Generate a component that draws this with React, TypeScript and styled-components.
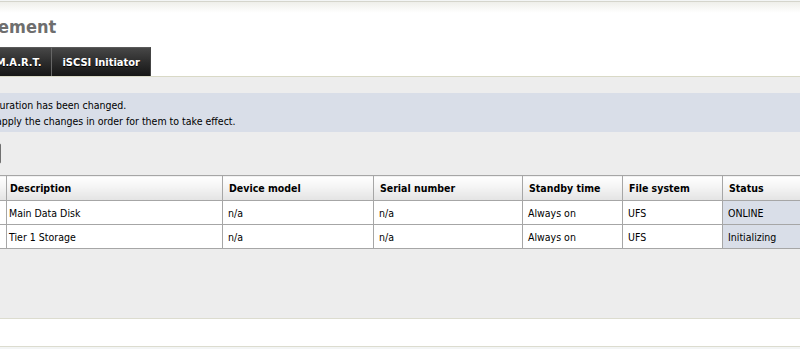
import React from 'react';
import styled, { createGlobalStyle } from 'styled-components';

const GlobalStyle = createGlobalStyle`
  html, body {
    margin: 0;
    padding: 0;
  }
  body {
    background: #f3f5f5;
    font-family: 'DejaVu Sans Condensed', 'DejaVu Sans', sans-serif;
    font-size: 10.5px;
    color: #000;
    overflow: hidden;
  }
`;

const Viewport = styled.div`
  width: 800px;
  height: 349px;
  overflow: hidden;
  padding-top: 1px;
  box-sizing: border-box;
`;

// the screenshot is a crop of a wider page, so the sheet starts left of the window
const Sheet = styled.div`
  margin-left: -140px;
  width: 1060px;
`;

const Header = styled.header`
  border-top: 1px solid #d5d5cc;
  border-bottom: 1px solid #d9d9c6;
  background: linear-gradient(to bottom, #efefea 0px, #ffffff 11px, #ffffff 100%);
  padding: 14px 0 0 22px;
`;

const Title = styled.h1`
  margin: 0;
  font-size: 18px;
  line-height: 22px;
  font-weight: bold;
  color: #6e6e6e;
`;

const TabRow = styled.nav`
  display: flex;
  margin: 9px 0 0 -2px;
  height: 29px;
`;

const Tab = styled.div`
  display: flex;
  align-items: center;
  padding: 0 10px;
  border-top: 1px solid #5a5a5a;
  border-left: 1px solid #666;
  background: linear-gradient(to bottom, #474747 0%, #2a2a2a 55%, #161616 100%);
  color: #fff;
  font-weight: bold;
  font-size: 11px;
  text-shadow: 0 1px 0 #000;
  white-space: nowrap;

  &:last-child {
    border-right: 1px solid #444;
  }
`;

const Content = styled.main`
  background: #ededed;
  border-bottom: 1px solid #dcdccf;
  padding: 16px 0 69px 22px;
`;

const InfoBox = styled.div`
  height: 39px;
  box-sizing: border-box;
  background: #d9dee8;
  padding-left: 68px;
  display: flex;
  flex-direction: column;
  justify-content: center;
  line-height: 16px;
`;

const ButtonRow = styled.div`
  display: flex;
  margin-top: 11px;
`;

const ApplyButton = styled.button`
  width: 119px;
  height: 21px;
  border: 1px solid #707070;
  border-radius: 2px;
  background: linear-gradient(to bottom, #fbfbfb, #dadada);
  font-family: inherit;
  font-size: 10.5px;
  color: #000;
  padding: 0;
`;

const Table = styled.table`
  margin-top: 11px;
  border-collapse: collapse;
  table-layout: fixed;
  width: 1020px;
`;

const Col = styled.col<{ $w: number }>`
  width: ${(p) => p.$w}px;
`;

const Th = styled.th<{ $pad: number }>`
  height: 24px;
  padding: 0 0 0 ${(p) => p.$pad + 1}px;
  border: 1px solid #a6a6a6;
  background: linear-gradient(to bottom, #ffffff 0%, #f4f4f4 45%, #e3e3e3 100%);
  text-align: left;
  font-weight: bold;
  white-space: nowrap;
  overflow: hidden;
`;

const Td = styled.td<{ $pad: number; $status?: boolean }>`
  height: 23px;
  padding: 0 0 0 ${(p) => p.$pad}px;
  border: 1px solid #a6a6a6;
  background: ${(p) => (p.$status ? '#d9dee8' : '#ffffff')};
  white-space: nowrap;
  overflow: hidden;
`;

const Footer = styled.footer`
  height: 27px;
  background: #fff;
  border-bottom: 1px solid #dcdccf;
`;

const tabs = ['Management', 'S.M.A.R.T.', 'iSCSI Initiator'];

type Disk = {
  disk: string;
  size: string;
  desc: string;
  model: string;
  serial: string;
  standby: string;
  fs: string;
  status: string;
};

const columns: { title: string; w: number; pad: number; key: keyof Disk }[] = [
  { title: 'Disk', w: 60, pad: 5, key: 'disk' },
  { title: 'Size', w: 64, pad: 5, key: 'size' },
  { title: 'Description', w: 216, pad: 2, key: 'desc' },
  { title: 'Device model', w: 151, pad: 5, key: 'model' },
  { title: 'Serial number', w: 149, pad: 5, key: 'serial' },
  { title: 'Standby time', w: 100, pad: 5, key: 'standby' },
  { title: 'File system', w: 100, pad: 5, key: 'fs' },
  { title: 'Status', w: 180, pad: 5, key: 'status' },
];

const disks: Disk[] = [
  { disk: 'ada0', size: '2.7TB', desc: 'Main Data Disk', model: 'n/a', serial: 'n/a', standby: 'Always on', fs: 'UFS', status: 'ONLINE' },
  { disk: 'ada1', size: '1.8TB', desc: 'Tier 1 Storage', model: 'n/a', serial: 'n/a', standby: 'Always on', fs: 'UFS', status: 'Initializing' },
];

export default function App() {
  return (
    <>
      <GlobalStyle />
      <Viewport>
        <Sheet>
          <Header>
            <Title>Disks|Management</Title>
            <TabRow>
              {tabs.map((t) => (
                <Tab key={t}>{t}</Tab>
              ))}
            </TabRow>
          </Header>

          <Content>
            <InfoBox>
              <div>The configuration has been changed.</div>
              <div>You must apply the changes in order for them to take effect.</div>
            </InfoBox>

            <ButtonRow>
              <ApplyButton>Apply changes</ApplyButton>
            </ButtonRow>

            <Table>
              <colgroup>
                {columns.map((c) => (
                  <Col key={c.title} $w={c.w} />
                ))}
              </colgroup>
              <thead>
                <tr>
                  {columns.map((c) => (
                    <Th key={c.title} $pad={c.pad}>
                      {c.title}
                    </Th>
                  ))}
                </tr>
              </thead>
              <tbody>
                {disks.map((d) => (
                  <tr key={d.disk}>
                    {columns.map((c) => (
                      <Td key={c.key} $pad={c.pad} $status={c.key === 'status'}>
                        {d[c.key]}
                      </Td>
                    ))}
                  </tr>
                ))}
              </tbody>
            </Table>
          </Content>

          <Footer />
        </Sheet>
      </Viewport>
    </>
  );
}
